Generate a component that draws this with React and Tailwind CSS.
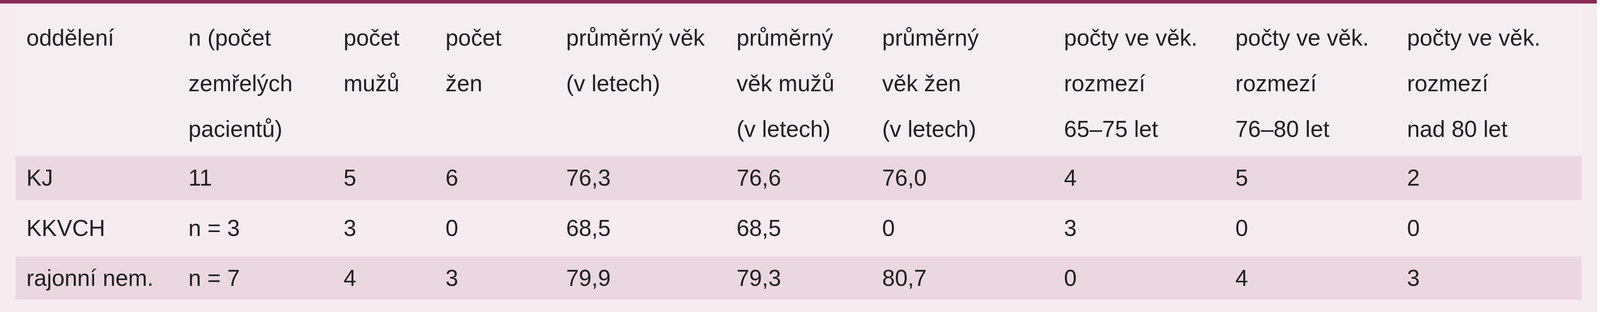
import React from 'react';

// šířky sloupců v procentech šířky tabulky
const colClass = [
  'w-[10.34%]',
  'w-[9.91%]',
  'w-[6.51%]',
  'w-[7.70%]',
  'w-[10.88%]',
  'w-[9.30%]',
  'w-[11.61%]',
  'w-[10.94%]',
  'w-[10.96%]',
  'w-[11.85%]',
];

const headers = [
  ['oddělení'],
  ['n (počet', 'zemřelých', 'pacientů)'],
  ['počet', 'mužů'],
  ['počet', 'žen'],
  ['průměrný věk', '(v letech)'],
  ['průměrný', 'věk mužů', '(v letech)'],
  ['průměrný', 'věk žen', '(v letech)'],
  ['počty ve věk.', 'rozmezí', '65–75 let'],
  ['počty ve věk.', 'rozmezí', '76–80 let'],
  ['počty ve věk.', 'rozmezí', 'nad 80 let'],
];

const rows = [
  { cells: ['KJ', '11', '5', '6', '76,3', '76,6', '76,0', '4', '5', '2'], shaded: true, height: 'h-[113px]' },
  { cells: ['KKVCH', 'n = 3', '3', '0', '68,5', '68,5', '0', '3', '0', '0'], shaded: false, height: 'h-[145px]' },
  { cells: ['rajonní nem.', 'n = 7', '4', '3', '79,9', '79,3', '80,7', '0', '4', '3'], shaded: true, height: 'h-[110px]' },
];

const App = () => {
  return (
    <div className="w-full h-[800px] bg-white pr-[0.19vw]">
      <div className="w-full h-[800px] bg-[#f6ebef] flex flex-col font-['Liberation_Sans',Arial,sans-serif] text-[#222022]">
        <div className="h-[9px] bg-[#8a2b58]" />
        <div className="h-[14px] bg-[#f4eef2]" />
        <div className="pl-[0.97vw] pr-[0.95vw]">
          <table className="table-fixed border-collapse w-full text-[1.43vw]">
            <colgroup>
              {colClass.map((cls) => (
                <col key={cls} className={cls} />
              ))}
            </colgroup>
            <thead>
              <tr className="h-[377px] bg-[#f4eef1]">
                {headers.map((lines, i) => (
                  <th key={i} className="align-top text-left font-normal pl-[0.68vw] pt-[15px] leading-[117px]">
                    {lines.map((line) => (
                      <span key={line} className="block whitespace-nowrap">
                        {line}
                      </span>
                    ))}
                  </th>
                ))}
              </tr>
            </thead>
            <tbody>
              {rows.map((row, r) => (
                <tr key={r} className={`${row.height} ${row.shaded ? 'bg-[#ead7df]' : ''}`}>
                  {row.cells.map((cell, c) => (
                    <td key={c} className="align-middle pl-[0.68vw] leading-none whitespace-nowrap">
                      {cell}
                    </td>
                  ))}
                </tr>
              ))}
            </tbody>
          </table>
        </div>
      </div>
    </div>
  );
};

export default App;
